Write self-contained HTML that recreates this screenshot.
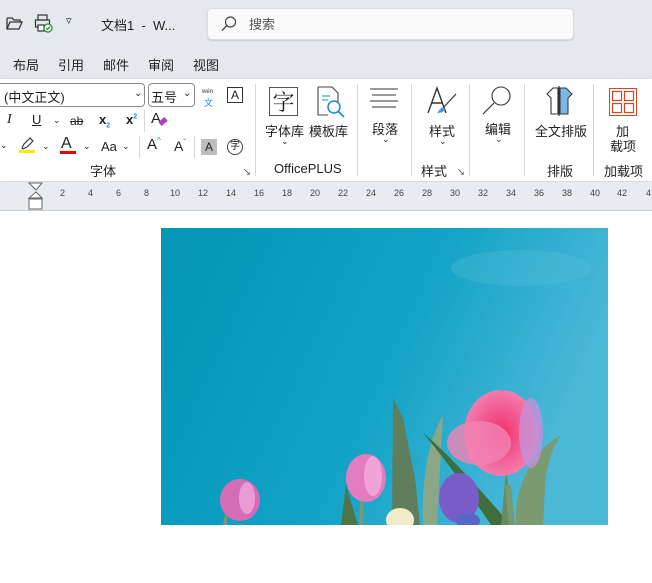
<!DOCTYPE html>
<html><head><meta charset="utf-8"><style>
*{margin:0;padding:0;box-sizing:border-box}
body{width:652px;height:583px;overflow:hidden;background:#fff;font-family:"Liberation Sans","Noto Sans CJK SC",sans-serif;color:#222;position:relative}
.a{position:absolute;white-space:nowrap}
.t{font-size:13px}
.s{font-size:12px}
.sep{position:absolute;width:1px;background:#d6d6d6}
</style></head><body>
<div class="a" style="left:0;top:0;width:652px;height:80px;background:#e3e9ed"></div>
<svg class="a" style="left:5px;top:14px" width="18" height="18" viewBox="0 0 18 18"><path d="M2 4h5l2 2h6v2M2 4v11h12l3-7H5l-3 7" fill="none" stroke="#333" stroke-width="1.3"/></svg>
<svg class="a" style="left:34px;top:13px" width="20" height="20" viewBox="0 0 20 20"><rect x="4" y="2" width="9" height="5" fill="none" stroke="#333" stroke-width="1.2"/><rect x="1.5" y="7" width="14" height="7" fill="none" stroke="#333" stroke-width="1.2"/><rect x="4" y="12" width="6" height="6" fill="#fff" stroke="#333" stroke-width="1.2"/><circle cx="14" cy="15" r="4" fill="#fff" stroke="#2a8a3a" stroke-width="1.3"/><path d="M12 15l1.5 1.5 2.5-3" fill="none" stroke="#2a8a3a" stroke-width="1.2"/></svg>
<div class="a s" style="left:66px;top:14px;font-size:11px">▿</div>
<div class="a t" style="left:101px;top:15px">文档1 &nbsp;- &nbsp;W...</div>
<div class="a" style="left:207px;top:8px;width:367px;height:32px;background:#fafafa;border:1px solid #d8dcdf;border-radius:5px;box-shadow:0 1px 1px #ccd"></div>
<svg class="a" style="left:220px;top:15px" width="18" height="18" viewBox="0 0 18 18"><circle cx="10.5" cy="7" r="5" fill="none" stroke="#444" stroke-width="1.2"/><path d="M7 10.5L2 15.5" stroke="#444" stroke-width="1.3"/></svg>
<div class="a t" style="left:249px;top:14px;color:#555">搜索</div>
<div class="a t" style="left:13px;top:55px">布局</div>
<div class="a t" style="left:58px;top:55px">引用</div>
<div class="a t" style="left:103px;top:55px">邮件</div>
<div class="a t" style="left:148px;top:55px">审阅</div>
<div class="a t" style="left:193px;top:55px">视图</div>
<div class="a" style="left:0;top:79px;width:652px;height:102px;background:#fff;box-shadow:0 1px 3px rgba(0,0,0,.25)"></div>
<div class="a" style="left:-4px;top:83px;width:149px;height:24px;border:1px solid #8a8a8a;border-radius:4px"></div>
<div class="a t" style="left:4px;top:87px">(中文正文)</div>
<div class="a s" style="left:134px;top:88px;font-size:10px">⌄</div>
<div class="a" style="left:148px;top:83px;width:47px;height:24px;border:1px solid #8a8a8a;border-radius:4px"></div>
<div class="a t" style="left:151px;top:87px">五号</div>
<div class="a s" style="left:183px;top:88px;font-size:10px">⌄</div>
<div class="a" style="left:202px;top:89px;font-size:6px;color:#333">wén</div>
<div class="a" style="left:204px;top:96px;font-size:9px;color:#1a8ad4">文</div>
<div class="a" style="left:227px;top:87px;width:16px;height:16px;border:1px solid #333;font-size:12px;text-align:center;line-height:14px">A</div>
<div class="a" style="left:7px;top:112px;font-size:14px;font-style:italic;font-family:'Liberation Serif',serif">I</div>
<div class="a t" style="left:32px;top:112px;text-decoration:underline">U</div>
<div class="a" style="left:53px;top:115px;font-size:9px">⌄</div>
<div class="a s" style="left:70px;top:114px;text-decoration:line-through">ab</div>
<div class="a t" style="left:99px;top:112px;font-weight:bold">x<sub style="font-size:7px;color:#1a8ad4">2</sub></div>
<div class="a t" style="left:126px;top:112px;font-weight:bold">x<sup style="font-size:7px;color:#1a8ad4">2</sup></div>
<div class="sep" style="left:144px;top:110px;height:22px"></div>
<div class="a" style="left:151px;top:110px;font-size:15px">A</div>
<div class="a" style="left:159px;top:119px;width:8px;height:5px;background:#b43ec0;transform:rotate(-40deg)"></div>
<div class="a s" style="left:0;top:140px;font-size:9px">⌄</div>
<svg class="a" style="left:19px;top:137px" width="18" height="16" viewBox="0 0 18 16"><path d="M3 11l2-4 6-6 3 3-6 6-4 2z" fill="none" stroke="#333" stroke-width="1.1"/><rect x="0" y="13" width="16" height="3" fill="#f6ee00"/></svg>
<div class="a s" style="left:42px;top:141px;font-size:9px">⌄</div>
<div class="a" style="left:61px;top:135px;font-size:16px">A</div>
<div class="a" style="left:60px;top:151px;width:16px;height:3px;background:#e00"></div>
<div class="a s" style="left:83px;top:141px;font-size:9px">⌄</div>
<div class="a t" style="left:101px;top:139px">Aa</div>
<div class="a s" style="left:122px;top:141px;font-size:9px">⌄</div>
<div class="sep" style="left:139px;top:136px;height:22px"></div>
<div class="a" style="left:147px;top:136px;font-size:15px">A<span style="font-size:8px;color:#1a8ad4;vertical-align:top">^</span></div>
<div class="a" style="left:174px;top:138px;font-size:14px">A<span style="font-size:8px;color:#1a8ad4;vertical-align:top">ˇ</span></div>
<div class="sep" style="left:194px;top:136px;height:22px"></div>
<div class="a" style="left:201px;top:139px;width:16px;height:16px;background:#bdbdbd;font-size:12px;text-align:center;line-height:16px">A</div>
<div class="a" style="left:227px;top:139px;width:16px;height:16px;border:1px solid #444;border-radius:50%;font-size:10px;text-align:center;line-height:14px">字</div>
<div class="a t" style="left:90px;top:161px">字体</div>
<div class="a" style="left:243px;top:167px;font-size:8px">↘</div>
<div class="sep" style="left:255px;top:84px;height:92px"></div>
<div class="a" style="left:269px;top:87px;width:29px;height:29px;border:1px solid #555;font-size:22px;text-align:center;line-height:27px;font-family:'Noto Serif CJK SC',serif">字</div>
<div class="a t" style="left:265px;top:121px">字体库</div>
<div class="a s" style="left:281px;top:136px;font-size:9px">⌄</div>
<svg class="a" style="left:316px;top:86px" width="30" height="32" viewBox="0 0 30 32"><path d="M2 1h14l6 6v14" fill="none" stroke="#444" stroke-width="1.1"/><path d="M2 1v28h10" fill="none" stroke="#444" stroke-width="1.1"/><path d="M6 10h8M6 14h6" stroke="#1a8ad4"/><circle cx="18" cy="21" r="6" fill="#fff" stroke="#1a8ad4" stroke-width="1.5"/><path d="M22 25l6 6" stroke="#1a8ad4" stroke-width="1.6"/></svg>
<div class="a t" style="left:309px;top:121px">模板库</div>
<div class="a t" style="left:274px;top:161px">OfficePLUS</div>
<div class="sep" style="left:357px;top:84px;height:92px"></div>
<svg class="a" style="left:369px;top:88px" width="30" height="22" viewBox="0 0 30 22"><path d="M1 1h28M3 7h24M1 13h28M3 19h24" stroke="#333" stroke-width="1.1"/></svg>
<div class="a t" style="left:372px;top:119px">段落</div>
<div class="a s" style="left:382px;top:134px;font-size:9px">⌄</div>
<div class="sep" style="left:411px;top:84px;height:92px"></div>
<svg class="a" style="left:426px;top:86px" width="32" height="32" viewBox="0 0 32 32"><path d="M2 27L11 2l9 25M6 17h10" fill="none" stroke="#333" stroke-width="1.4"/><path d="M30 8L17 22" stroke="#333" stroke-width="1.2"/><path d="M17 21c-3 1-4 4-6 6 4 0 7-1 8-4z" fill="#4a9ad8"/></svg>
<div class="a t" style="left:429px;top:121px">样式</div>
<div class="a s" style="left:439px;top:136px;font-size:9px">⌄</div>
<div class="a t" style="left:421px;top:161px">样式</div>
<div class="a" style="left:457px;top:167px;font-size:8px">↘</div>
<div class="sep" style="left:469px;top:84px;height:92px"></div>
<svg class="a" style="left:481px;top:85px" width="32" height="32" viewBox="0 0 32 32"><circle cx="20" cy="11" r="9" fill="none" stroke="#333" stroke-width="1.1"/><path d="M13 18L2 29" stroke="#333" stroke-width="1.2"/></svg>
<div class="a t" style="left:485px;top:119px">编辑</div>
<div class="a s" style="left:495px;top:134px;font-size:9px">⌄</div>
<div class="sep" style="left:524px;top:84px;height:92px"></div>
<svg class="a" style="left:543px;top:86px" width="34" height="30" viewBox="0 0 34 30"><path d="M10 2L4 8l4 4V28h7V2z" fill="#fff" stroke="#333" stroke-width="1.1"/><path d="M17 2v26h8V12l4-4-6-6z" fill="#7ab8e8" stroke="#333" stroke-width="1"/><path d="M16 0v30" stroke="#333" stroke-width="1.2"/></svg>
<div class="a t" style="left:535px;top:121px">全文排版</div>
<div class="a t" style="left:547px;top:161px">排版</div>
<div class="sep" style="left:593px;top:84px;height:92px"></div>
<svg class="a" style="left:609px;top:88px" width="28" height="28" viewBox="0 0 28 28"><rect x="0.5" y="0.5" width="27" height="27" fill="none" stroke="#d2491f"/><rect x="3.5" y="3.5" width="9" height="9" fill="none" stroke="#d2491f" stroke-width="1.2"/><rect x="15.5" y="3.5" width="9" height="9" fill="none" stroke="#d2491f" stroke-width="1.2"/><rect x="3.5" y="15.5" width="9" height="9" fill="none" stroke="#d2491f" stroke-width="1.2"/><rect x="15.5" y="15.5" width="9" height="9" fill="none" stroke="#d2491f" stroke-width="1.2"/></svg>
<div class="a t" style="left:616px;top:121px">加</div>
<div class="a t" style="left:610px;top:136px">载项</div>
<div class="a t" style="left:604px;top:161px">加载项</div>
<div class="a" style="left:0;top:182px;width:652px;height:29px;background:#e6ecef;border-bottom:1px solid #c8cdd0"></div>
<svg class="a" style="left:28px;top:182px" width="16" height="30" viewBox="0 0 16 30"><path d="M1 1h13L8 8zM8 10l6 6H1z" fill="#fff" stroke="#666"/><rect x="1" y="17" width="13" height="10" fill="#fff" stroke="#666"/></svg>
<div class="a" style="left:0;top:188px;width:652px;font-size:9px;color:#444">
<span class="a" style="left:60px">2</span><span class="a" style="left:88px">4</span><span class="a" style="left:116px">6</span><span class="a" style="left:144px">8</span><span class="a" style="left:170px">10</span><span class="a" style="left:198px">12</span><span class="a" style="left:226px">14</span><span class="a" style="left:254px">16</span><span class="a" style="left:282px">18</span><span class="a" style="left:310px">20</span><span class="a" style="left:338px">22</span><span class="a" style="left:366px">24</span><span class="a" style="left:394px">26</span><span class="a" style="left:422px">28</span><span class="a" style="left:450px">30</span><span class="a" style="left:478px">32</span><span class="a" style="left:506px">34</span><span class="a" style="left:534px">36</span><span class="a" style="left:562px">38</span><span class="a" style="left:590px">40</span><span class="a" style="left:617px">42</span><span class="a" style="left:646px">4</span></div>
<svg class="a" style="left:161px;top:228px" width="447" height="297" viewBox="0 0 447 297">
<defs><linearGradient id="sky" x1="0" y1="0" x2="1" y2="0.3"><stop offset="0" stop-color="#0295b5"/><stop offset="0.6" stop-color="#12a3c6"/><stop offset="1" stop-color="#4bb8d8"/></linearGradient>
<radialGradient id="pk" cx="0.5" cy="0.5" r="0.6"><stop offset="0" stop-color="#f0306a"/><stop offset="1" stop-color="#f28cbc"/></radialGradient></defs>
<rect width="447" height="297" fill="url(#sky)"/>
<ellipse cx="360" cy="40" rx="70" ry="18" fill="#5cbfdc" opacity=".3"/>
<path d="M231 297L232 170l10 20 12 60 5 47z" fill="#5f7f5c"/>
<path d="M262 297c-2-40 5-85 20-110l-6 110z" fill="#8aa888"/>
<path d="M262 205c25 20 60 60 88 92h-20c-20-30-45-65-68-92z" fill="#3f6e3a"/>
<path d="M355 297c-2-30 10-70 45-90-20 30-15 60-18 90z" fill="#7a9a72"/>
<path d="M340 297l5-55 8 55z" fill="#678d5f"/>
<path d="M180 297l5-40 12 40z" fill="#4e7548"/>
<path d="M198 297l2-40h3l-1 40zM62 297l2-12h3l-1 12zM348 297l-4-40h6l4 40z" fill="#789a70"/>
<ellipse cx="340" cy="205" rx="37" ry="43" fill="url(#pk)"/>
<ellipse cx="318" cy="215" rx="32" ry="22" fill="#f283b4" opacity=".8"/>
<ellipse cx="370" cy="205" rx="12" ry="35" fill="#c78fd8" opacity=".8"/>
<ellipse cx="205" cy="250" rx="20" ry="24" fill="#e47cc0"/>
<ellipse cx="212" cy="248" rx="9" ry="20" fill="#f5b4e0" opacity=".7"/>
<ellipse cx="79" cy="272" rx="20" ry="21" fill="#d56cb8"/>
<ellipse cx="86" cy="270" rx="8" ry="16" fill="#f1b0e0" opacity=".7"/>
<ellipse cx="298" cy="270" rx="20" ry="25" fill="#7a5cc8"/>
<ellipse cx="307" cy="293" rx="12" ry="8" fill="#5866c8"/>
<ellipse cx="239" cy="292" rx="14" ry="12" fill="#f0ecc8"/>
</svg>
</body></html>
